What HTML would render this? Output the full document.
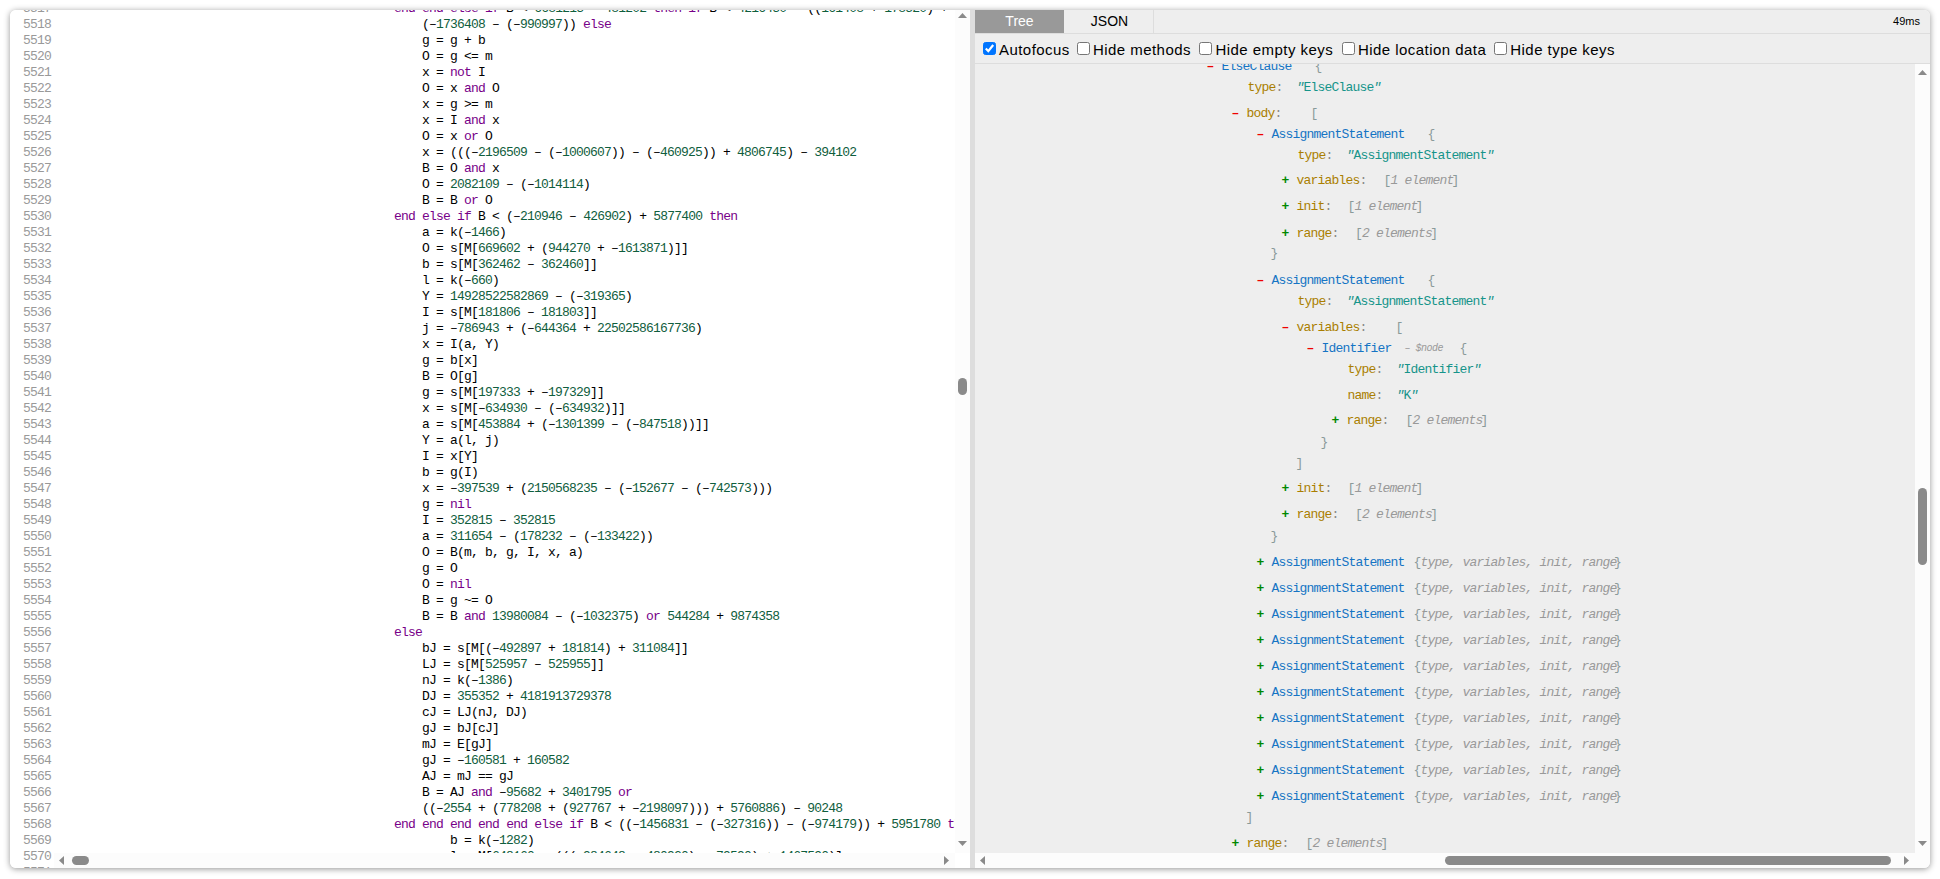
<!DOCTYPE html>
<html><head><meta charset="utf-8"><style>
*{box-sizing:border-box}
html,body{margin:0;padding:0;background:#fff;width:1940px;height:879px;overflow:hidden}
#box{position:absolute;left:10px;top:10px;width:1920px;height:858px;border-radius:6px;overflow:hidden;background:#fff;box-shadow:0 1px 6px rgba(0,0,0,.42)}
.mono{font-family:"Liberation Mono",monospace;font-size:13px;letter-spacing:-0.800px;line-height:16px;white-space:pre}
#left{position:absolute;left:0;top:0;width:960px;height:858px;overflow:hidden;background:#fff}
.ln{position:absolute;height:16px;color:#000}
.num{position:absolute;left:0;width:41px;text-align:right;color:#999;height:16px}
.k{color:#708}
.n{color:#0f5e3d}
#sep{position:absolute;left:960px;top:0;width:5px;height:858px;background:#ddd}
#right{position:absolute;left:965px;top:0;width:955px;height:858px;background:#eee;overflow:hidden;font-family:"Liberation Sans",sans-serif}
#tabs{position:absolute;left:0;top:0;width:955px;height:24px;border-bottom:1px solid #ddd}
.tab{position:absolute;top:0;height:23px;font-size:14px;line-height:23px;text-align:center}
#tools{position:absolute;left:0;top:24px;width:955px;height:30px;border-bottom:1px solid #ddd}
.cb{position:absolute;top:8px;width:13px;height:13px;border:1px solid #767676;border-radius:2.5px;background:#fff}
.lbl{position:absolute;top:0px;font-size:15px;letter-spacing:0.45px;line-height:31px;color:#000;white-space:nowrap}
#tree{position:absolute;left:0;top:54px;width:955px;height:789px;overflow:hidden}
.t{position:absolute;height:16px}
.tm{color:#e00;font-weight:bold}
.tp{color:#080;font-weight:bold}
.nm{color:#1574c4}
.ky{color:#aa7e00}
.cl{color:#888}
.st{color:#16948a}
.br{color:#8a9a9a}
.ph{color:#8a9a9a}
.ph i{color:#999}
.q{font-style:italic}
.cbk{margin-left:-2px}
.cbk2{margin-left:-2.5px}
.sm{color:#999;font-size:10px;letter-spacing:-0.5px}
.sb{position:absolute;background:#fcfcfc}
.thumb{position:absolute;background:#8a8a8a;border-radius:5px}
</style></head>
<body>
<div id="box">
 <div id="left" class="mono">
  <div class="num" style="top:-9.50px">5517</div>
  <div class="num" style="top:6.50px">5518</div>
  <div class="num" style="top:22.50px">5519</div>
  <div class="num" style="top:38.50px">5520</div>
  <div class="num" style="top:54.50px">5521</div>
  <div class="num" style="top:70.50px">5522</div>
  <div class="num" style="top:86.50px">5523</div>
  <div class="num" style="top:102.50px">5524</div>
  <div class="num" style="top:118.50px">5525</div>
  <div class="num" style="top:134.50px">5526</div>
  <div class="num" style="top:150.50px">5527</div>
  <div class="num" style="top:166.50px">5528</div>
  <div class="num" style="top:182.50px">5529</div>
  <div class="num" style="top:198.50px">5530</div>
  <div class="num" style="top:214.50px">5531</div>
  <div class="num" style="top:230.50px">5532</div>
  <div class="num" style="top:246.50px">5533</div>
  <div class="num" style="top:262.50px">5534</div>
  <div class="num" style="top:278.50px">5535</div>
  <div class="num" style="top:294.50px">5536</div>
  <div class="num" style="top:310.50px">5537</div>
  <div class="num" style="top:326.50px">5538</div>
  <div class="num" style="top:342.50px">5539</div>
  <div class="num" style="top:358.50px">5540</div>
  <div class="num" style="top:374.50px">5541</div>
  <div class="num" style="top:390.50px">5542</div>
  <div class="num" style="top:406.50px">5543</div>
  <div class="num" style="top:422.50px">5544</div>
  <div class="num" style="top:438.50px">5545</div>
  <div class="num" style="top:454.50px">5546</div>
  <div class="num" style="top:470.50px">5547</div>
  <div class="num" style="top:486.50px">5548</div>
  <div class="num" style="top:502.50px">5549</div>
  <div class="num" style="top:518.50px">5550</div>
  <div class="num" style="top:534.50px">5551</div>
  <div class="num" style="top:550.50px">5552</div>
  <div class="num" style="top:566.50px">5553</div>
  <div class="num" style="top:582.50px">5554</div>
  <div class="num" style="top:598.50px">5555</div>
  <div class="num" style="top:614.50px">5556</div>
  <div class="num" style="top:630.50px">5557</div>
  <div class="num" style="top:646.50px">5558</div>
  <div class="num" style="top:662.50px">5559</div>
  <div class="num" style="top:678.50px">5560</div>
  <div class="num" style="top:694.50px">5561</div>
  <div class="num" style="top:710.50px">5562</div>
  <div class="num" style="top:726.50px">5563</div>
  <div class="num" style="top:742.50px">5564</div>
  <div class="num" style="top:758.50px">5565</div>
  <div class="num" style="top:774.50px">5566</div>
  <div class="num" style="top:790.50px">5567</div>
  <div class="num" style="top:806.50px">5568</div>
  <div class="num" style="top:822.50px">5569</div>
  <div class="num" style="top:838.50px">5570</div>
  <div class="num" style="top:854.50px">5571</div>
  <div class="ln" style="top:-9.50px;left:384.00px"><span class="k">end</span> <span class="k">end</span> <span class="k">else</span> <span class="k">if</span> B &lt; <span class="n">6681213</span> – <span class="n">481202</span> <span class="k">then</span> <span class="k">if</span> B &lt; <span class="n">4216430</span> – ((<span class="n">161408</span> + <span class="n">178520</span>) +</div>
  <div class="ln" style="top:6.50px;left:412.00px">(–<span class="n">1736408</span> – (–<span class="n">990997</span>)) <span class="k">else</span></div>
  <div class="ln" style="top:22.50px;left:412.00px">g = g + b</div>
  <div class="ln" style="top:38.50px;left:412.00px">O = g &lt;= m</div>
  <div class="ln" style="top:54.50px;left:412.00px">x = <span class="k">not</span> I</div>
  <div class="ln" style="top:70.50px;left:412.00px">O = x <span class="k">and</span> O</div>
  <div class="ln" style="top:86.50px;left:412.00px">x = g &gt;= m</div>
  <div class="ln" style="top:102.50px;left:412.00px">x = I <span class="k">and</span> x</div>
  <div class="ln" style="top:118.50px;left:412.00px">O = x <span class="k">or</span> O</div>
  <div class="ln" style="top:134.50px;left:412.00px">x = (((–<span class="n">2196509</span> – (–<span class="n">1000607</span>)) – (–<span class="n">460925</span>)) + <span class="n">4806745</span>) – <span class="n">394102</span></div>
  <div class="ln" style="top:150.50px;left:412.00px">B = O <span class="k">and</span> x</div>
  <div class="ln" style="top:166.50px;left:412.00px">O = <span class="n">2082109</span> – (–<span class="n">1014114</span>)</div>
  <div class="ln" style="top:182.50px;left:412.00px">B = B <span class="k">or</span> O</div>
  <div class="ln" style="top:198.50px;left:384.00px"><span class="k">end</span> <span class="k">else</span> <span class="k">if</span> B &lt; (–<span class="n">210946</span> – <span class="n">426902</span>) + <span class="n">5877400</span> <span class="k">then</span></div>
  <div class="ln" style="top:214.50px;left:412.00px">a = k(–<span class="n">1466</span>)</div>
  <div class="ln" style="top:230.50px;left:412.00px">O = s[M[<span class="n">669602</span> + (<span class="n">944270</span> + –<span class="n">1613871</span>)]]</div>
  <div class="ln" style="top:246.50px;left:412.00px">b = s[M[<span class="n">362462</span> – <span class="n">362460</span>]]</div>
  <div class="ln" style="top:262.50px;left:412.00px">l = k(–<span class="n">660</span>)</div>
  <div class="ln" style="top:278.50px;left:412.00px">Y = <span class="n">14928522582869</span> – (–<span class="n">319365</span>)</div>
  <div class="ln" style="top:294.50px;left:412.00px">I = s[M[<span class="n">181806</span> – <span class="n">181803</span>]]</div>
  <div class="ln" style="top:310.50px;left:412.00px">j = –<span class="n">786943</span> + (–<span class="n">644364</span> + <span class="n">22502586167736</span>)</div>
  <div class="ln" style="top:326.50px;left:412.00px">x = I(a, Y)</div>
  <div class="ln" style="top:342.50px;left:412.00px">g = b[x]</div>
  <div class="ln" style="top:358.50px;left:412.00px">B = O[g]</div>
  <div class="ln" style="top:374.50px;left:412.00px">g = s[M[<span class="n">197333</span> + –<span class="n">197329</span>]]</div>
  <div class="ln" style="top:390.50px;left:412.00px">x = s[M[–<span class="n">634930</span> – (–<span class="n">634932</span>)]]</div>
  <div class="ln" style="top:406.50px;left:412.00px">a = s[M[<span class="n">453884</span> + (–<span class="n">1301399</span> – (–<span class="n">847518</span>))]]</div>
  <div class="ln" style="top:422.50px;left:412.00px">Y = a(l, j)</div>
  <div class="ln" style="top:438.50px;left:412.00px">I = x[Y]</div>
  <div class="ln" style="top:454.50px;left:412.00px">b = g(I)</div>
  <div class="ln" style="top:470.50px;left:412.00px">x = –<span class="n">397539</span> + (<span class="n">2150568235</span> – (–<span class="n">152677</span> – (–<span class="n">742573</span>)))</div>
  <div class="ln" style="top:486.50px;left:412.00px">g = <span class="k">nil</span></div>
  <div class="ln" style="top:502.50px;left:412.00px">I = <span class="n">352815</span> – <span class="n">352815</span></div>
  <div class="ln" style="top:518.50px;left:412.00px">a = <span class="n">311654</span> – (<span class="n">178232</span> – (–<span class="n">133422</span>))</div>
  <div class="ln" style="top:534.50px;left:412.00px">O = B(m, b, g, I, x, a)</div>
  <div class="ln" style="top:550.50px;left:412.00px">g = O</div>
  <div class="ln" style="top:566.50px;left:412.00px">O = <span class="k">nil</span></div>
  <div class="ln" style="top:582.50px;left:412.00px">B = g ~= O</div>
  <div class="ln" style="top:598.50px;left:412.00px">B = B <span class="k">and</span> <span class="n">13980084</span> – (–<span class="n">1032375</span>) <span class="k">or</span> <span class="n">544284</span> + <span class="n">9874358</span></div>
  <div class="ln" style="top:614.50px;left:384.00px"><span class="k">else</span></div>
  <div class="ln" style="top:630.50px;left:412.00px">bJ = s[M[(–<span class="n">492897</span> + <span class="n">181814</span>) + <span class="n">311084</span>]]</div>
  <div class="ln" style="top:646.50px;left:412.00px">LJ = s[M[<span class="n">525957</span> – <span class="n">525955</span>]]</div>
  <div class="ln" style="top:662.50px;left:412.00px">nJ = k(–<span class="n">1386</span>)</div>
  <div class="ln" style="top:678.50px;left:412.00px">DJ = <span class="n">355352</span> + <span class="n">4181913729378</span></div>
  <div class="ln" style="top:694.50px;left:412.00px">cJ = LJ(nJ, DJ)</div>
  <div class="ln" style="top:710.50px;left:412.00px">gJ = bJ[cJ]</div>
  <div class="ln" style="top:726.50px;left:412.00px">mJ = E[gJ]</div>
  <div class="ln" style="top:742.50px;left:412.00px">gJ = –<span class="n">160581</span> + <span class="n">160582</span></div>
  <div class="ln" style="top:758.50px;left:412.00px">AJ = mJ == gJ</div>
  <div class="ln" style="top:774.50px;left:412.00px">B = AJ <span class="k">and</span> –<span class="n">95682</span> + <span class="n">3401795</span> <span class="k">or</span></div>
  <div class="ln" style="top:790.50px;left:412.00px">((–<span class="n">2554</span> + (<span class="n">778208</span> + (<span class="n">927767</span> + –<span class="n">2198097</span>))) + <span class="n">5760886</span>) – <span class="n">90248</span></div>
  <div class="ln" style="top:806.50px;left:384.00px"><span class="k">end</span> <span class="k">end</span> <span class="k">end</span> <span class="k">end</span> <span class="k">end</span> <span class="k">else</span> <span class="k">if</span> B &lt; ((–<span class="n">1456831</span> – (–<span class="n">327316</span>)) – (–<span class="n">974179</span>)) + <span class="n">5951780</span> <span class="k">then</span></div>
  <div class="ln" style="top:822.50px;left:440.00px">b = k(–<span class="n">1282</span>)</div>
  <div class="ln" style="top:838.50px;left:440.00px">l = M[<span class="n">648160</span> – (((–<span class="n">984648</span> – <span class="n">480920</span>) – <span class="n">79590</span>) + <span class="n">1467590</span>)]</div>
  <div class="ln" style="top:854.50px;left:440.00px">O = s[M[–<span class="n">240217</span> + <span class="n">240219</span>]]</div>
  <div class="sb" style="left:945px;top:0;width:15px;height:843px"></div>
  <div class="thumb" style="left:948px;top:368px;width:9px;height:17px"></div>
  <svg style="position:absolute;left:948px;top:3px" width="9" height="6"><polygon points="0,5 4.5,0 9,5" fill="#8a8a8a"/></svg>
  <svg style="position:absolute;left:948px;top:831px" width="9" height="6"><polygon points="0,0 4.5,5 9,0" fill="#8a8a8a"/></svg>
  <div class="sb" style="left:44px;top:843px;width:901px;height:15px"></div>
  <div style="position:absolute;left:945px;top:843px;width:15px;height:15px;background:#fff"></div>
  <div class="thumb" style="left:62px;top:846px;width:17px;height:9px"></div>
  <svg style="position:absolute;left:49px;top:846px" width="6" height="9"><polygon points="5,0 0,4.5 5,9" fill="#8a8a8a"/></svg>
  <svg style="position:absolute;left:934px;top:846px" width="6" height="9"><polygon points="0,0 5,4.5 0,9" fill="#8a8a8a"/></svg>
 </div>
 <div id="sep"></div>
 <div id="right">
  <div id="tabs">
   <div class="tab" style="left:0;width:89px;background:#999;color:#fff">Tree</div>
   <div class="tab" style="left:89px;width:90px;border-right:1px solid #ddd;color:#000;padding-left:2px">JSON</div>
   <div style="position:absolute;right:10px;top:0;font-size:11px;line-height:23px;color:#000">49ms</div>
  </div>
  <div id="tools">
   <div class="cb" style="left:8px;background:#0075ff;border-color:#0075ff"><svg width="11" height="11" style="position:absolute;left:0;top:0"><polyline points="1.8,5.6 4.3,8.2 9.2,2" fill="none" stroke="#fff" stroke-width="2.2"/></svg></div>
   <div class="lbl" style="left:24px">Autofocus</div>
   <div class="cb" style="left:102px"></div>
   <div class="lbl" style="left:118px">Hide methods</div>
   <div class="cb" style="left:224px"></div>
   <div class="lbl" style="left:240.5px">Hide empty keys</div>
   <div class="cb" style="left:367px"></div>
   <div class="lbl" style="left:383px">Hide location data</div>
   <div class="cb" style="left:519px"></div>
   <div class="lbl" style="left:535.3px">Hide type keys</div>
  </div>
  <div id="tree" class="mono">
   <div class="t tm" style="top:-5.50px;left:231.50px">–</div>
   <div class="t nm" style="top:-5.50px;left:246.50px">ElseClause</div>
   <div class="t br" style="top:-5.50px;left:339.50px">{</div>
   <div class="t ky" style="top:15.50px;left:272.50px">type<span class=cl>:</span></div>
   <div class="t st" style="top:15.50px;left:321.50px"><i class=q>"</i>ElseClause<i class=q>"</i></div>
   <div class="t tm" style="top:41.50px;left:256.50px">–</div>
   <div class="t ky" style="top:41.50px;left:271.50px">body<span class=cl>:</span></div>
   <div class="t br" style="top:41.50px;left:335.50px">[</div>
   <div class="t tm" style="top:62.50px;left:281.50px">–</div>
   <div class="t nm" style="top:62.50px;left:296.50px">AssignmentStatement</div>
   <div class="t br" style="top:62.50px;left:452.50px">{</div>
   <div class="t ky" style="top:83.50px;left:322.50px">type<span class=cl>:</span></div>
   <div class="t st" style="top:83.50px;left:371.50px"><i class=q>"</i>AssignmentStatement<i class=q>"</i></div>
   <div class="t tp" style="top:109.00px;left:306.50px">+</div>
   <div class="t ky" style="top:109.00px;left:321.50px">variables<span class=cl>:</span></div>
   <div class="t ph" style="top:109.00px;left:408.50px">[<i>1 element</i><span class=cbk>]</span></div>
   <div class="t tp" style="top:135.10px;left:306.50px">+</div>
   <div class="t ky" style="top:135.10px;left:321.50px">init<span class=cl>:</span></div>
   <div class="t ph" style="top:135.10px;left:372.50px">[<i>1 element</i><span class=cbk>]</span></div>
   <div class="t tp" style="top:161.50px;left:306.50px">+</div>
   <div class="t ky" style="top:161.50px;left:321.50px">range<span class=cl>:</span></div>
   <div class="t ph" style="top:161.50px;left:380.10px">[<i>2 elements</i><span class=cbk>]</span></div>
   <div class="t br" style="top:181.50px;left:295.50px">}</div>
   <div class="t tm" style="top:208.50px;left:281.50px">–</div>
   <div class="t nm" style="top:208.50px;left:296.50px">AssignmentStatement</div>
   <div class="t br" style="top:208.50px;left:452.50px">{</div>
   <div class="t ky" style="top:229.50px;left:322.50px">type<span class=cl>:</span></div>
   <div class="t st" style="top:229.50px;left:371.50px"><i class=q>"</i>AssignmentStatement<i class=q>"</i></div>
   <div class="t tm" style="top:255.50px;left:306.50px">–</div>
   <div class="t ky" style="top:255.50px;left:321.50px">variables<span class=cl>:</span></div>
   <div class="t br" style="top:255.50px;left:420.50px">[</div>
   <div class="t tm" style="top:276.50px;left:331.50px">–</div>
   <div class="t nm" style="top:276.50px;left:346.50px">Identifier</div>
   <div class="t sm" style="top:276.50px;left:429.50px">– <i>$node</i></div>
   <div class="t br" style="top:276.50px;left:484.50px">{</div>
   <div class="t ky" style="top:297.50px;left:372.50px">type<span class=cl>:</span></div>
   <div class="t st" style="top:297.50px;left:421.50px"><i class=q>"</i>Identifier<i class=q>"</i></div>
   <div class="t ky" style="top:323.50px;left:372.50px">name<span class=cl>:</span></div>
   <div class="t st" style="top:323.50px;left:421.50px"><i class=q>"</i>K<i class=q>"</i></div>
   <div class="t tp" style="top:349.10px;left:356.50px">+</div>
   <div class="t ky" style="top:349.10px;left:371.50px">range<span class=cl>:</span></div>
   <div class="t ph" style="top:349.10px;left:430.50px">[<i>2 elements</i><span class=cbk>]</span></div>
   <div class="t br" style="top:370.50px;left:345.50px">}</div>
   <div class="t br" style="top:391.50px;left:320.50px">]</div>
   <div class="t tp" style="top:417.10px;left:306.50px">+</div>
   <div class="t ky" style="top:417.10px;left:321.50px">init<span class=cl>:</span></div>
   <div class="t ph" style="top:417.10px;left:372.50px">[<i>1 element</i><span class=cbk>]</span></div>
   <div class="t tp" style="top:443.00px;left:306.50px">+</div>
   <div class="t ky" style="top:443.00px;left:321.50px">range<span class=cl>:</span></div>
   <div class="t ph" style="top:443.00px;left:380.10px">[<i>2 elements</i><span class=cbk>]</span></div>
   <div class="t br" style="top:464.50px;left:295.50px">}</div>
   <div class="t tp" style="top:490.50px;left:281.50px">+</div>
   <div class="t nm" style="top:490.50px;left:296.50px">AssignmentStatement</div>
   <div class="t ph" style="top:490.50px;left:438.50px">{<i>type, variables, init, range</i><span class=cbk2>}</span></div>
   <div class="t tp" style="top:516.50px;left:281.50px">+</div>
   <div class="t nm" style="top:516.50px;left:296.50px">AssignmentStatement</div>
   <div class="t ph" style="top:516.50px;left:438.50px">{<i>type, variables, init, range</i><span class=cbk2>}</span></div>
   <div class="t tp" style="top:542.50px;left:281.50px">+</div>
   <div class="t nm" style="top:542.50px;left:296.50px">AssignmentStatement</div>
   <div class="t ph" style="top:542.50px;left:438.50px">{<i>type, variables, init, range</i><span class=cbk2>}</span></div>
   <div class="t tp" style="top:568.50px;left:281.50px">+</div>
   <div class="t nm" style="top:568.50px;left:296.50px">AssignmentStatement</div>
   <div class="t ph" style="top:568.50px;left:438.50px">{<i>type, variables, init, range</i><span class=cbk2>}</span></div>
   <div class="t tp" style="top:594.50px;left:281.50px">+</div>
   <div class="t nm" style="top:594.50px;left:296.50px">AssignmentStatement</div>
   <div class="t ph" style="top:594.50px;left:438.50px">{<i>type, variables, init, range</i><span class=cbk2>}</span></div>
   <div class="t tp" style="top:620.50px;left:281.50px">+</div>
   <div class="t nm" style="top:620.50px;left:296.50px">AssignmentStatement</div>
   <div class="t ph" style="top:620.50px;left:438.50px">{<i>type, variables, init, range</i><span class=cbk2>}</span></div>
   <div class="t tp" style="top:646.50px;left:281.50px">+</div>
   <div class="t nm" style="top:646.50px;left:296.50px">AssignmentStatement</div>
   <div class="t ph" style="top:646.50px;left:438.50px">{<i>type, variables, init, range</i><span class=cbk2>}</span></div>
   <div class="t tp" style="top:672.50px;left:281.50px">+</div>
   <div class="t nm" style="top:672.50px;left:296.50px">AssignmentStatement</div>
   <div class="t ph" style="top:672.50px;left:438.50px">{<i>type, variables, init, range</i><span class=cbk2>}</span></div>
   <div class="t tp" style="top:698.50px;left:281.50px">+</div>
   <div class="t nm" style="top:698.50px;left:296.50px">AssignmentStatement</div>
   <div class="t ph" style="top:698.50px;left:438.50px">{<i>type, variables, init, range</i><span class=cbk2>}</span></div>
   <div class="t tp" style="top:724.50px;left:281.50px">+</div>
   <div class="t nm" style="top:724.50px;left:296.50px">AssignmentStatement</div>
   <div class="t ph" style="top:724.50px;left:438.50px">{<i>type, variables, init, range</i><span class=cbk2>}</span></div>
   <div class="t br" style="top:745.50px;left:270.50px">]</div>
   <div class="t tp" style="top:771.50px;left:256.50px">+</div>
   <div class="t ky" style="top:771.50px;left:271.50px">range<span class=cl>:</span></div>
   <div class="t ph" style="top:771.50px;left:330.50px">[<i>2 elements</i><span class=cbk>]</span></div>
  </div>
  <div class="sb" style="left:940px;top:54px;width:15px;height:789px"></div>
  <div class="thumb" style="left:943px;top:478px;width:9px;height:77px"></div>
  <svg style="position:absolute;left:943px;top:60px" width="9" height="6"><polygon points="0,5 4.5,0 9,5" fill="#8a8a8a"/></svg>
  <svg style="position:absolute;left:943px;top:831px" width="9" height="6"><polygon points="0,0 4.5,5 9,0" fill="#8a8a8a"/></svg>
  <div class="sb" style="left:0;top:843px;width:940px;height:15px"></div>
  <div style="position:absolute;left:940px;top:843px;width:15px;height:15px;background:#fcfcfc"></div>
  <div class="thumb" style="left:470px;top:846px;width:446px;height:9px"></div>
  <svg style="position:absolute;left:5px;top:846px" width="6" height="9"><polygon points="5,0 0,4.5 5,9" fill="#8a8a8a"/></svg>
  <svg style="position:absolute;left:929px;top:846px" width="6" height="9"><polygon points="0,0 5,4.5 0,9" fill="#8a8a8a"/></svg>
 </div>
</div>
</body></html>
